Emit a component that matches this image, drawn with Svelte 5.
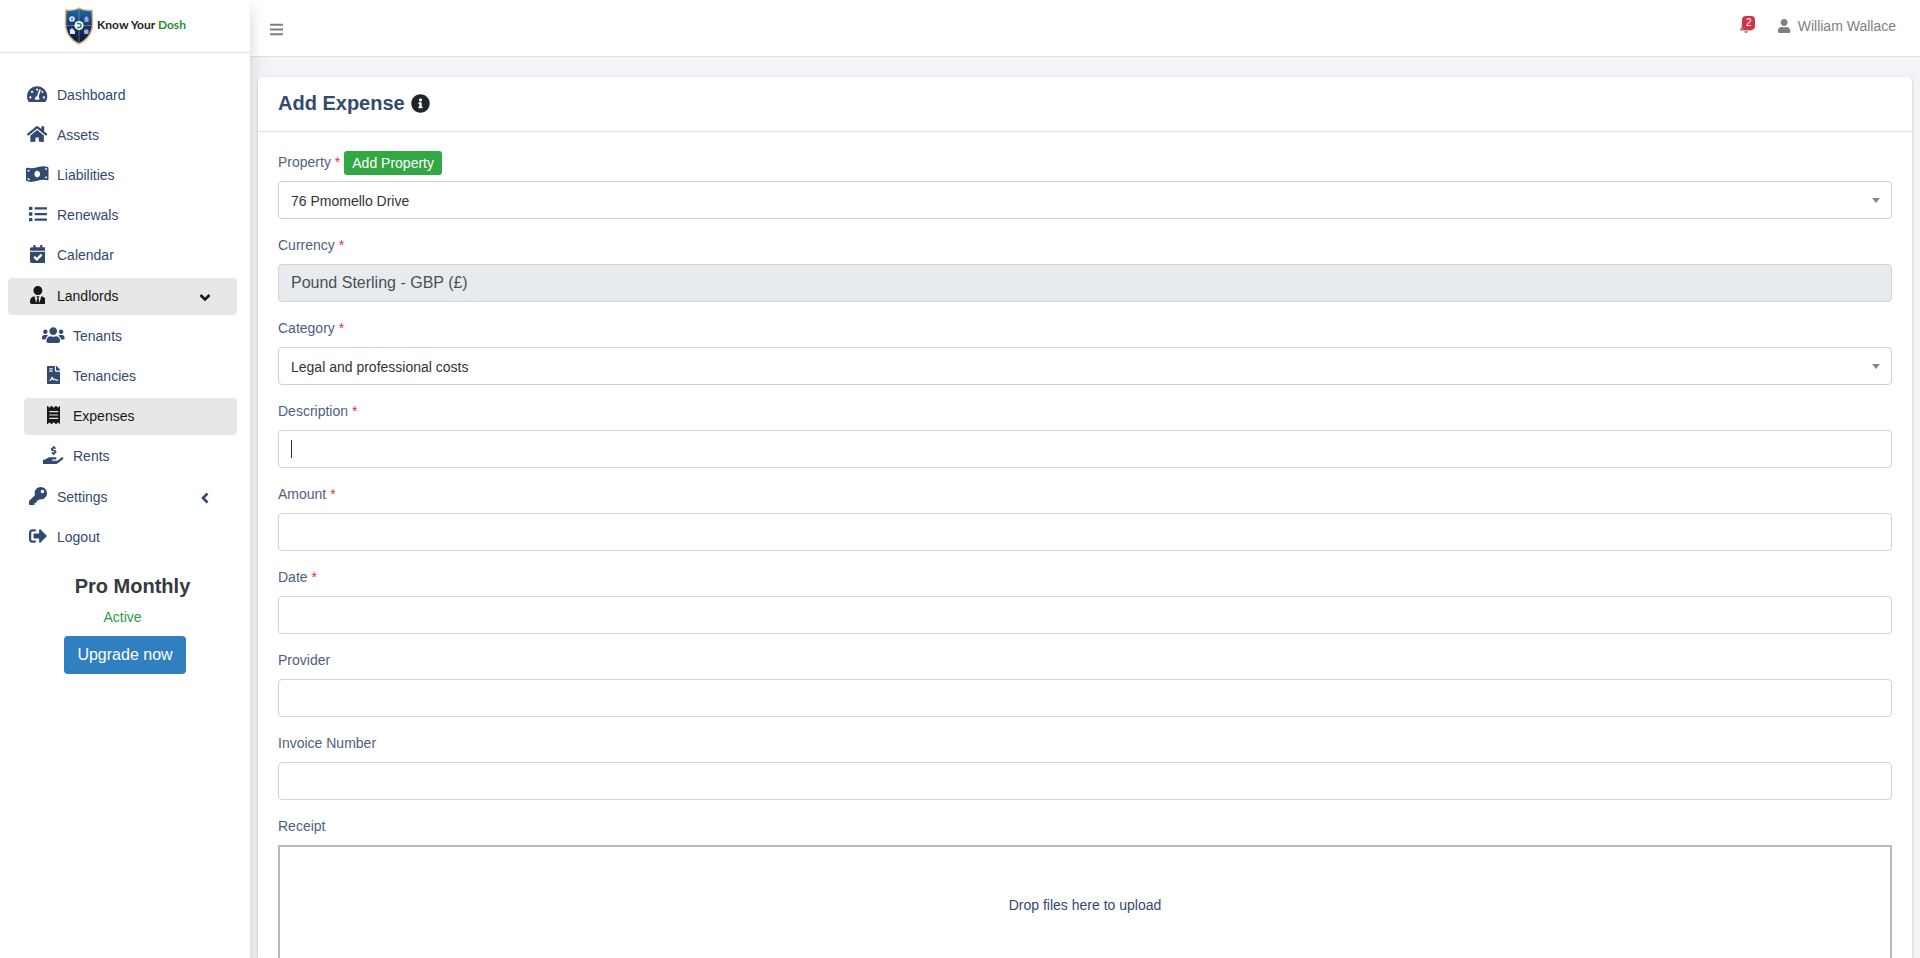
<script>
	const icons = {
		dashboard: {
			width: 576,
			path: 'M288 32C128.94 32 0 160.94 0 320c0 52.8 14.25 102.26 39.06 144.8 5.61 9.62 16.3 15.2 27.44 15.2h443c11.14 0 21.83-5.58 27.44-15.2C561.75 422.26 576 372.8 576 320c0-159.06-128.94-288-288-288zm0 64c14.71 0 26.58 10.13 30.32 23.65-1.11 2.26-2.64 4.23-3.45 6.67l-9.22 27.67c-5.13 3.49-10.97 6.01-17.64 6.01-17.67 0-32-14.33-32-32S270.33 96 288 96zM96 384c-17.67 0-32-14.33-32-32s14.33-32 32-32 32 14.33 32 32-14.33 32-32 32zm48-160c-17.67 0-32-14.33-32-32s14.33-32 32-32 32 14.33 32 32-14.33 32-32 32zm246.77-72.41l-61.33 184C343.13 347.33 352 364.54 352 384c0 11.72-3.38 22.55-8.88 32H232.88c-5.5-9.45-8.88-20.28-8.88-32 0-33.94 26.5-61.43 59.9-63.59l61.34-184.01c4.17-12.56 17.73-19.45 30.36-15.17 12.57 4.19 19.35 17.79 15.17 30.36zm14.66 57.2l15.52-46.55c3.47-1.29 7.13-2.23 11.05-2.23 17.67 0 32 14.33 32 32s-14.33 32-32 32c-11.38-.01-20.89-6.28-26.57-15.22zM480 384c-17.67 0-32-14.33-32-32s14.33-32 32-32 32 14.33 32 32-14.33 32-32 32z'
		},
		home: {
			width: 576,
			path: 'M280.37 148.26L96 300.11V464a16 16 0 0 0 16 16l112.06-.29a16 16 0 0 0 15.92-16V368a16 16 0 0 1 16-16h64a16 16 0 0 1 16 16v95.64a16 16 0 0 0 16 16.05L464 480a16 16 0 0 0 16-16V300L295.67 148.26a12.19 12.19 0 0 0-15.3 0zM571.6 251.47L488 182.56V44.05a12 12 0 0 0-12-12h-56a12 12 0 0 0-12 12v72.61L318.47 43a48 48 0 0 0-61 0L4.34 251.47a12 12 0 0 0-1.6 16.9l25.5 31A12 12 0 0 0 45.15 301l235.22-193.74a12.19 12.19 0 0 1 15.3 0L530.9 301a12 12 0 0 0 16.9-1.6l25.5-31a12 12 0 0 0-1.7-16.93z'
		},
		money: {
			width: 640,
			path: 'M621.16 54.46C582.37 38.19 543.55 32 504.75 32c-123.17-.01-246.33 62.34-369.5 62.34-30.89 0-61.76-3.92-92.65-13.72-3.47-1.1-6.95-1.62-10.35-1.62C15.04 79 0 92.32 0 110.81v317.26c0 12.63 7.23 24.6 18.84 29.46C57.63 473.81 96.45 480 135.25 480c123.17 0 246.34-62.35 369.51-62.35 30.89 0 61.76 3.92 92.65 13.72 3.47 1.1 6.95 1.62 10.35 1.62 17.21 0 32.25-13.32 32.25-31.81V83.93c-.01-12.64-7.24-24.6-18.85-29.47zM48 132.22c20.12 5.04 41.12 7.57 62.72 8.93C104.84 170.54 79 192.69 48 192.69v-60.47zm0 285v-47.78c34.37 0 62.18 27.27 63.71 61.4-22.53-1.81-43.59-6.31-63.71-13.62zM320 352c-44.19 0-80-42.99-80-96 0-53.02 35.82-96 80-96s80 42.98 80 96c0 53.03-35.83 96-80 96zm272 27.78c-17.52-4.39-35.71-6.85-54.32-8.44 5.87-26.08 27.5-45.88 54.32-49.28v57.72zm0-236.11c-30.89-3.91-54.86-29.7-55.81-61.55 19.54 2.17 38.09 6.23 55.81 12.66v48.89z'
		},
		list: {
			width: 512,
			path: 'M16 48h64a16 16 0 0 1 16 16v64a16 16 0 0 1-16 16H16a16 16 0 0 1-16-16V64a16 16 0 0 1 16-16zm0 160h64a16 16 0 0 1 16 16v64a16 16 0 0 1-16 16H16a16 16 0 0 1-16-16v-64a16 16 0 0 1 16-16zm0 160h64a16 16 0 0 1 16 16v64a16 16 0 0 1-16 16H16a16 16 0 0 1-16-16v-64a16 16 0 0 1 16-16zM176 64h320a16 16 0 0 1 16 16v32a16 16 0 0 1-16 16H176a16 16 0 0 1-16-16V80a16 16 0 0 1 16-16zm0 160h320a16 16 0 0 1 16 16v32a16 16 0 0 1-16 16H176a16 16 0 0 1-16-16v-32a16 16 0 0 1 16-16zm0 160h320a16 16 0 0 1 16 16v32a16 16 0 0 1-16 16H176a16 16 0 0 1-16-16v-32a16 16 0 0 1 16-16z'
		},
		calendar: {
			width: 448,
			path: 'M436 160H12c-6.627 0-12-5.373-12-12v-36c0-26.51 21.49-48 48-48h48V12c0-6.627 5.373-12 12-12h40c6.627 0 12 5.373 12 12v52h128V12c0-6.627 5.373-12 12-12h40c6.627 0 12 5.373 12 12v52h48c26.51 0 48 21.49 48 48v36c0 6.627-5.373 12-12 12zM12 192h424c6.627 0 12 5.373 12 12v260c0 26.51-21.49 48-48 48H48c-26.51 0-48-21.49-48-48V204c0-6.627 5.373-12 12-12zm333.296 95.947l-28.169-28.398c-4.667-4.705-12.265-4.736-16.97-.068L194.12 364.665l-45.98-46.352c-4.667-4.705-12.266-4.736-16.971-.068l-28.397 28.17c-4.705 4.667-4.736 12.265-.068 16.97l82.601 83.269c4.667 4.705 12.265 4.736 16.97.068l142.953-141.805c4.705-4.667 4.736-12.265.068-16.97z'
		},
		landlord: {
			width: 448,
			path: 'M224 256c70.7 0 128-57.3 128-128S294.7 0 224 0 96 57.3 96 128s57.3 128 128 128zm95.8 32.6L272 480l-32-136 32-56h-96l32 56-32 136-47.8-191.4C56.9 292 0 350.3 0 422.4V464c0 26.5 21.5 48 48 48h352c26.5 0 48-21.5 48-48v-41.6c0-72.1-56.9-130.4-128.2-133.8z'
		},
		users: {
			width: 640,
			path: 'M96 224c35.3 0 64-28.7 64-64s-28.7-64-64-64-64 28.7-64 64 28.7 64 64 64zm448 0c35.3 0 64-28.7 64-64s-28.7-64-64-64-64 28.7-64 64 28.7 64 64 64zm32 32h-64c-17.6 0-33.5 7.1-45.1 18.6 40.3 22.1 68.9 62 75.1 109.4h66c17.7 0 32-14.3 32-32v-32c0-35.3-28.7-64-64-64zm-256 0c61.9 0 112-50.1 112-112S381.9 32 320 32 208 82.1 208 144s50.1 112 112 112zm76.8 32h-8.3c-20.8 10-43.9 16-68.5 16s-47.6-6-68.5-16h-8.3C179.6 288 128 339.6 128 403.2V432c0 26.5 21.5 48 48 48h288c26.5 0 48-21.5 48-48v-28.8c0-63.6-51.6-115.2-115.2-115.2zm-223.7-13.4C161.5 263.1 145.6 256 128 256H64c-35.3 0-64 28.7-64 64v32c0 17.7 14.3 32 32 32h65.9c6.3-47.4 34.9-87.3 75.2-109.4z'
		},
		contract: {
			width: 384,
			path: 'M224 136V0H24C10.7 0 0 10.7 0 24v464c0 13.3 10.7 24 24 24h336c13.3 0 24-10.7 24-24V160H248c-13.2 0-24-10.8-24-24zM64 72c0-4.42 3.58-8 8-8h80c4.42 0 8 3.58 8 8v16c0 4.42-3.58 8-8 8H72c-4.42 0-8-3.58-8-8V72zm0 64c0-4.42 3.58-8 8-8h80c4.42 0 8 3.58 8 8v16c0 4.42-3.58 8-8 8H72c-4.42 0-8-3.58-8-8v-16zm192.81 248H304c8.84 0 16 7.16 16 16s-7.16 16-16 16h-47.19c-16.45 0-31.27-9.14-38.64-23.86-2.95-5.92-8.09-6.52-10.17-6.52s-7.22.59-10.02 6.19l-7.67 15.34a15.986 15.986 0 0 1-14.31 8.84c-.38 0-.75-.02-1.14-.05-6.45-.45-12-4.75-14.03-10.89L144 354.59l-10.61 31.88c-5.89 17.66-22.38 29.53-41 29.53H80c-8.84 0-16-7.16-16-16s7.16-16 16-16h12.39c4.83 0 9.11-3.08 10.64-7.66l18.19-54.64c3.3-9.81 12.44-16.41 22.78-16.41s19.48 6.59 22.77 16.41l13.88 41.64c19.77-16.19 54.05-9.7 66 14.16 2.02 4.06 5.96 6.5 10.16 6.5zM377 105L279.1 7c-4.5-4.5-10.6-7-17-7H256v128h128v-6.1c0-6.3-2.5-12.4-7-16.9z'
		},
		receipt: {
			width: 384,
			path: 'M358.4 3.2L320 48 265.6 3.2a15.9 15.9 0 0 0-19.2 0L192 48 137.6 3.2a15.9 15.9 0 0 0-19.2 0L64 48 25.6 3.2C15-4.7 0 2.8 0 16v480c0 13.2 15 20.7 25.6 12.8L64 464l54.4 44.8a15.9 15.9 0 0 0 19.2 0L192 464l54.4 44.8a15.9 15.9 0 0 0 19.2 0L320 464l38.4 44.8c10.5 7.9 25.6.4 25.6-12.8V16c0-13.2-15-20.7-25.6-12.8zM320 360c0 4.4-3.6 8-8 8H72c-4.4 0-8-3.6-8-8v-16c0-4.4 3.6-8 8-8h240c4.4 0 8 3.6 8 8v16zm0-96c0 4.4-3.6 8-8 8H72c-4.4 0-8-3.6-8-8v-16c0-4.4 3.6-8 8-8h240c4.4 0 8 3.6 8 8v16zm0-96c0 4.4-3.6 8-8 8H72c-4.4 0-8-3.6-8-8v-16c0-4.4 3.6-8 8-8h240c4.4 0 8 3.6 8 8v16z'
		},
		rents: {
			width: 576,
			path: 'M271.06,144.3l54.27,14.3a8.59,8.59,0,0,1,6.63,8.1c0,4.6-4.09,8.4-9.12,8.4h-35.6a30,30,0,0,1-11.19-2.2c-5.24-2.2-11.28-1.7-15.3,2l-19,17.5a11.68,11.68,0,0,0-2.25,2.66,11.42,11.42,0,0,0,3.88,15.74,83.77,83.77,0,0,0,34.51,11.5V240c0,8.8,7.83,16,17.37,16h17.37c9.55,0,17.38-7.2,17.38-16V222.4c32.93-3.6,57.84-31,53.5-63-3.15-23-22.46-41.3-46.56-47.7L282.68,97.4a8.59,8.59,0,0,1-6.63-8.1c0-4.6,4.09-8.4,9.12-8.4h35.6A30,30,0,0,1,332,83.1c5.23,2.2,11.28,1.7,15.3-2l19-17.5A11.31,11.31,0,0,0,368.47,61a11.43,11.43,0,0,0-3.84-15.78,83.82,83.82,0,0,0-34.52-11.5V16c0-8.8-7.82-16-17.37-16H295.37C285.82,0,278,7.2,278,16V33.6c-32.89,3.6-57.85,31-53.51,63C227.63,119.6,247,137.9,271.06,144.3ZM565.27,328.1c-11.8-10.7-30.2-10-42.6,0L430.27,402a63.64,63.64,0,0,1-40,14H272a16,16,0,0,1,0-32h78.29c15.9,0,30.71-10.9,33.25-26.6a31.2,31.2,0,0,0,.46-5.46A32,32,0,0,0,352,320H192a117.66,117.66,0,0,0-74.1,26.29L71.4,384H16A16,16,0,0,0,0,400v96a16,16,0,0,0,16,16H372.77a64,64,0,0,0,40-14L564,377a32,32,0,0,0,1.28-48.9Z'
		},
		key: {
			width: 512,
			path: 'M512 176.001C512 273.203 433.202 352 336 352c-11.22 0-22.19-1.062-32.827-3.069l-24.012 27.014A23.999 23.999 0 0 1 261.223 384H224v40c0 13.255-10.745 24-24 24h-40v40c0 13.255-10.745 24-24 24H24c-13.255 0-24-10.745-24-24v-78.059c0-6.365 2.529-12.47 7.029-16.971l161.802-161.802C163.108 213.814 160 195.271 160 176 160 78.798 238.797.001 335.999 0 433.488-.001 512 78.511 512 176.001zM336 128c0 26.51 21.49 48 48 48s48-21.49 48-48-21.49-48-48-48-48 21.49-48 48z'
		},
		logout: {
			width: 512,
			path: 'M497 273L329 441c-15 15-41 4.5-41-17v-96H152c-13.3 0-24-10.7-24-24v-96c0-13.3 10.7-24 24-24h136V88c0-21.4 25.9-32 41-17l168 168c9.3 9.4 9.3 24.6 0 34zM192 436v-40c0-6.6-5.4-12-12-12H96c-17.7 0-32-14.3-32-32V160c0-17.7 14.3-32 32-32h84c6.6 0 12-5.4 12-12V76c0-6.6-5.4-12-12-12H96c-53 0-96 43-96 96v192c0 53 43 96 96 96h84c6.6 0 12-5.4 12-12z'
		},
		bars: {
			width: 448,
			path: 'M16 132h416c8.837 0 16-7.163 16-16V76c0-8.837-7.163-16-16-16H16C7.163 60 0 67.163 0 76v40c0 8.837 7.163 16 16 16zm0 160h416c8.837 0 16-7.163 16-16v-40c0-8.837-7.163-16-16-16H16c-8.837 0-16 7.163-16 16v40c0 8.837 7.163 16 16 16zm0 160h416c8.837 0 16-7.163 16-16v-40c0-8.837-7.163-16-16-16H16c-8.837 0-16 7.163-16 16v40c0 8.837 7.163 16 16 16z'
		},
		bell: {
			width: 448,
			path: 'M439.39 362.29c-19.32-20.76-55.47-51.99-55.47-154.29 0-77.7-54.48-139.9-127.94-155.16V32c0-17.67-14.32-32-31.98-32s-31.98 14.33-31.98 32v20.84C118.56 68.1 64.08 130.3 64.08 208c0 102.3-36.15 133.53-55.47 154.29-6 6.45-8.66 14.16-8.61 21.71.11 16.4 12.98 32 32.1 32h383.8c19.12 0 32-15.6 32.1-32 .05-7.55-2.61-15.27-8.61-21.71zM67.53 368c21.22-27.97 44.42-74.33 44.53-159.42 0-.2-.06-.38-.06-.58 0-61.86 50.14-112 112-112s112 50.14 112 112c0 .2-.06.38-.06.58.11 85.1 23.31 131.46 44.53 159.42H67.53zM224 512c35.32 0 63.97-28.65 63.97-64H160.03c0 35.35 28.65 64 63.97 64z'
		},
		user: {
			width: 448,
			path: 'M224 256c70.7 0 128-57.3 128-128S294.7 0 224 0 96 57.3 96 128s57.3 128 128 128zm89.6 32h-16.7c-22.2 10.2-46.9 16-72.9 16s-50.6-5.8-72.9-16h-16.7C60.2 288 0 348.2 0 422.4V464c0 26.5 21.5 48 48 48h352c26.5 0 48-21.5 48-48v-41.6c0-74.2-60.2-134.4-134.4-134.4z'
		},
		info: {
			width: 512,
			path: 'M256 8C119.043 8 8 119.083 8 256c0 136.997 111.043 248 248 248s248-111.003 248-248C504 119.083 392.957 8 256 8zm0 110c23.196 0 42 18.804 42 42s-18.804 42-42 42-42-18.804-42-42 18.804-42 42-42zm56 254c0 6.627-5.373 12-12 12h-88c-6.627 0-12-5.373-12-12v-24c0-6.627 5.373-12 12-12h12v-64h-12c-6.627 0-12-5.373-12-12v-24c0-6.627 5.373-12 12-12h64c6.627 0 12 5.373 12 12v100h12c6.627 0 12 5.373 12 12v24z'
		}
	};

	const menu = [
		{ label: 'Dashboard', icon: 'dashboard' },
		{ label: 'Assets', icon: 'home' },
		{ label: 'Liabilities', icon: 'money' },
		{ label: 'Renewals', icon: 'list' },
		{ label: 'Calendar', icon: 'calendar' },
		{
			label: 'Landlords',
			icon: 'landlord',
			active: true,
			children: [
				{ label: 'Tenants', icon: 'users' },
				{ label: 'Tenancies', icon: 'contract' },
				{ label: 'Expenses', icon: 'receipt', active: true },
				{ label: 'Rents', icon: 'rents' }
			]
		},
		{ label: 'Settings', icon: 'key', children: [] },
		{ label: 'Logout', icon: 'logout' }
	];

	const fields = [
		{ id: 'property', label: 'Property', required: true, options: ['76 Pmomello Drive'], action: 'Add Property' },
		{ id: 'currency', label: 'Currency', required: true, value: 'Pound Sterling - GBP (£)', readonly: true },
		{ id: 'category', label: 'Category', required: true, options: ['Legal and professional costs'] },
		{ id: 'description', label: 'Description', required: true, current: true },
		{ id: 'amount', label: 'Amount', required: true },
		{ id: 'date', label: 'Date', required: true },
		{ id: 'provider', label: 'Provider' },
		{ id: 'invoice', label: 'Invoice Number' }
	];
</script>

{#snippet icon(name)}
	<svg class="icon" viewBox="0 0 {icons[name].width} 512" aria-hidden="true">
		<path d={icons[name].path} />
	</svg>
{/snippet}

{#snippet navLink(item)}
	<a href="#{item.label.toLowerCase()}" class="nav-link" class:active={item.active}>
		<span class="nav-icon">{@render icon(item.icon)}</span>
		<span class="nav-text">{item.label}</span>
		{#if item.children}
			<svg class="arrow" viewBox="0 0 12 12" aria-hidden="true">
				<path d={item.active ? 'M1.5 4L6 8.500L10.500 4' : 'M8.500 1.500L4 6L8.500 10.500'} />
			</svg>
		{/if}
	</a>
{/snippet}

<div class="wrapper">
	<aside>
		<a class="brand" href="#home">
			<svg class="shield" viewBox="0 0 30 38" aria-hidden="true">
				<defs>
					<linearGradient id="blue" x1="0" y1="0" x2="0" y2="1">
						<stop offset="0" stop-color="#1e6cab" />
						<stop offset="0.5" stop-color="#16356f" />
						<stop offset="1" stop-color="#0b1430" />
					</linearGradient>
				</defs>
				<path d="M15 1C12 3 6 3.500 2 3C1.500 6 1.500 10 1.500 18C2 27 8 34 15 37C22 34 28 27 28.500 18C28.500 10 28.500 6 28 3C24 3.500 18 3 15 1Z" fill="url(#blue)" stroke="#dcb987" stroke-width="1.500" />
				<path d="M15 2V36M2 18.500H28" stroke="#a89a80" stroke-width="0.600" />
				<g fill="#dcecfa">
					<circle cx="8" cy="12" r="2.800" />
					<path d="M19.500 12l3-3 3 3h-1v3h-4v-3z" opacity="0.600" />
					<path d="M5 24l3-3 3 3v3H6v-3z" />
					<rect x="20" y="22.500" width="4.500" height="4.500" rx="1" opacity="0.700" />
				</g>
				<path d="M8 10.500v3M7 12h2" stroke="#245a98" stroke-width="0.800" />
				<circle cx="15" cy="18.500" r="4.600" fill="#f3faff" />
				<path d="M13 16.500h2a2 2 0 0 1 0 4h-2" fill="none" stroke="#2b8a4c" stroke-width="1.500" />
			</svg>
			<span class="brand-text">Know Your <em>Dosh</em></span>
		</a>

		<nav>
			<ul>
				{#each menu as item}
					<li class:open={item.children?.length}>
						{@render navLink(item)}
						{#if item.children?.length}
							<ul class="submenu">
								{#each item.children as child}
									<li>{@render navLink(child)}</li>
								{/each}
							</ul>
						{/if}
					</li>
				{/each}
			</ul>
		</nav>

		<div class="plan">
			<h2>Pro Monthly</h2>
			<p>Active</p>
			<button type="button">Upgrade now</button>
		</div>
	</aside>

	<div class="page">
		<header>
			<button type="button" class="toggle" aria-label="Toggle menu">{@render icon('bars')}</button>
			<div class="account">
				<a href="#notifications" class="bell" aria-label="Notifications">
					{@render icon('bell')}
					<span class="badge">2</span>
				</a>
				<a href="#profile" class="user">
					{@render icon('user')}
					<span>William Wallace</span>
				</a>
			</div>
		</header>

		<main>
			<section class="card">
				<div class="card-header">
					<h1>Add Expense</h1>
					{@render icon('info')}
				</div>
				<form>
					{#each fields as field}
						<div class="group">
							<div class="label-row">
								<label for={field.id}>{field.label} {#if field.required}<span class="required">*</span>{/if}</label>
								{#if field.action}
									<button type="button">{field.action}</button>
								{/if}
							</div>
							{#if field.options}
								<div class="select">
									<select id={field.id}>
										{#each field.options as option}
											<option>{option}</option>
										{/each}
									</select>
								</div>
							{:else}
								<input
									id={field.id}
									type="text"
									class:current={field.current}
									value={field.value ?? ''}
									readonly={field.readonly}
								/>
							{/if}
						</div>
					{/each}
					<div class="group">
						<div class="label-row">
							<label for="receipt">Receipt</label>
						</div>
						<button type="button" id="receipt" class="dropzone">Drop files here to upload</button>
					</div>
				</form>
			</section>
		</main>
	</div>
</div>

<style>
	:global(body) {
		margin: 0;
		font-family: 'Liberation Sans', Arial, sans-serif;
		font-size: 14px;
		line-height: 21px;
		color: #34496f;
	}
	.wrapper {
		display: flex;
		height: 100vh;
		overflow: hidden;
	}
	a {
		color: inherit;
		text-decoration: none;
	}
	button,
	input,
	select {
		font-family: inherit;
		box-sizing: border-box;
	}
	button {
		cursor: pointer;
	}
	.icon {
		height: 18px;
		fill: currentColor;
	}

	/* sidebar */
	aside {
		position: relative;
		flex: 0 0 250px;
		background: #fff;
		box-shadow: 0 10px 16px rgba(0, 0, 0, 0.17);
	}
	.brand {
		display: flex;
		align-items: center;
		justify-content: center;
		gap: 3px;
		height: 52px;
		border-bottom: 1px solid #dee2e6;
	}
	.shield {
		width: 30px;
		height: 38px;
	}
	.brand-text {
		font-family: Lato, sans-serif;
		font-size: 12px;
		font-weight: 700;
		color: #222;
		padding-bottom: 3px;
	}
	.brand-text em {
		font-style: normal;
		color: #23922d;
	}
	nav {
		padding: 24px 13px 0 8px;
	}
	ul {
		list-style: none;
		margin: 0;
		padding: 0;
	}
	.open {
		padding-top: 1px;
	}
	.submenu {
		padding: 0 0 1px 16px;
	}
	.nav-link {
		display: flex;
		align-items: flex-start;
		gap: 6px;
		margin-bottom: 3px;
		padding: 8px 26px 8px 16px;
		border-radius: 4px;
	}
	.nav-link.active {
		background: #e7e7e7;
		color: #16181b;
	}
	.nav-icon {
		display: flex;
		justify-content: center;
		width: 27px;
	}
	.nav-text {
		flex: 1;
	}
	.arrow {
		width: 12px;
		height: 12px;
		align-self: center;
		fill: none;
		stroke: currentColor;
		stroke-width: 2.6;
	}
	.plan {
		display: flex;
		flex-direction: column;
		align-items: center;
		padding-top: 15px;
	}
	.plan h2 {
		margin: 0 0 9px;
		padding-left: 15px;
		font-size: 20px;
		line-height: 24px;
		color: #343a40;
	}
	.plan p {
		margin: 0 0 8px;
		padding-right: 5px;
		color: #1f9d45;
	}
	.plan button {
		height: 38px;
		padding: 0 13px;
		border: 0;
		border-radius: 4px;
		background: #307fc1;
		color: #fff;
		font-size: 16px;
	}

	/* top bar */
	.page {
		flex: 1;
		min-width: 0;
		display: flex;
		flex-direction: column;
		background: #f2f4f8;
	}
	header {
		display: flex;
		align-items: center;
		justify-content: space-between;
		height: 56px;
		padding: 0 24px 0 20px;
		background: #fff;
		border-bottom: 1px solid #dee2e6;
		color: #7f7f7f;
	}
	.toggle {
		display: flex;
		padding: 3px 0 0;
		border: 0;
		background: none;
		color: inherit;
	}
	.toggle .icon {
		height: 15px;
	}
	.bell .icon,
	.user .icon {
		height: 14px;
	}
	.account {
		display: flex;
		align-items: center;
		gap: 26px;
		padding-bottom: 4px;
	}
	.bell {
		position: relative;
		display: flex;
	}
	.badge {
		position: absolute;
		top: -3px;
		right: -3px;
		padding: 0 4px;
		border-radius: 4px;
		background: #cf3449;
		color: #fff;
		font-size: 10px;
		line-height: 14px;
	}
	.user {
		display: flex;
		align-items: center;
		gap: 7px;
	}

	/* form */
	main {
		flex: 1;
		overflow-y: auto;
		scrollbar-width: none;
		padding: 20px 8px;
	}
	.card {
		position: relative;
		z-index: 1;
		background: #fff;
		border-radius: 4px;
		box-shadow: 0 0 1px rgba(0, 0, 0, 0.13), 0 1px 3px rgba(0, 0, 0, 0.2);
	}
	.card-header {
		display: flex;
		align-items: center;
		gap: 6px;
		padding: 11px 20px 13px;
		border-bottom: 1px solid #dfdfdf;
	}
	.card-header .icon {
		height: 19px;
		color: #212529;
	}
	h1 {
		margin: 0;
		font-size: 20px;
		line-height: 30px;
	}
	form {
		padding: 20px;
	}
	.group {
		margin-bottom: 16px;
	}
	.label-row {
		display: flex;
		align-items: center;
		gap: 4px;
		height: 21px;
		margin-bottom: 8px;
	}
	label {
		color: #50607f;
	}
	.required {
		color: #e3342f;
	}
	.label-row button {
		height: 24px;
		padding: 0 8px;
		border: 0;
		border-radius: 3px;
		background: #33a744;
		color: #fff;
		font-size: 14px;
	}
	input,
	select {
		display: block;
		width: 100%;
		height: 38px;
		padding: 0 12px;
		border: 1px solid #ced4da;
		border-radius: 4px;
		background-color: #fff;
		color: #495057;
		font-size: 16px;
	}
	input[readonly] {
		background-color: #e7ebee;
	}
	/* text cursor of the field being edited */
	.current {
		background: linear-gradient(#333, #333) 12px center / 1px 18px no-repeat #fff;
	}
	.select {
		position: relative;
	}
	.select::after {
		content: '';
		position: absolute;
		top: 17px;
		right: 12px;
		border: 4px solid transparent;
		border-top: 5px solid #888;
		border-bottom: 0;
		pointer-events: none;
	}
	select {
		appearance: none;
		padding-top: 2px;
		border-color: #ccd0d4;
		color: #333;
		font-size: 14px;
	}
	.dropzone {
		display: block;
		width: 100%;
		min-height: 150px;
		padding: 48px 20px 78px;
		border: 2px solid #b9b9b9;
		background: #fff;
		color: inherit;
		font-size: 14px;
		line-height: 21px;
	}
</style>
